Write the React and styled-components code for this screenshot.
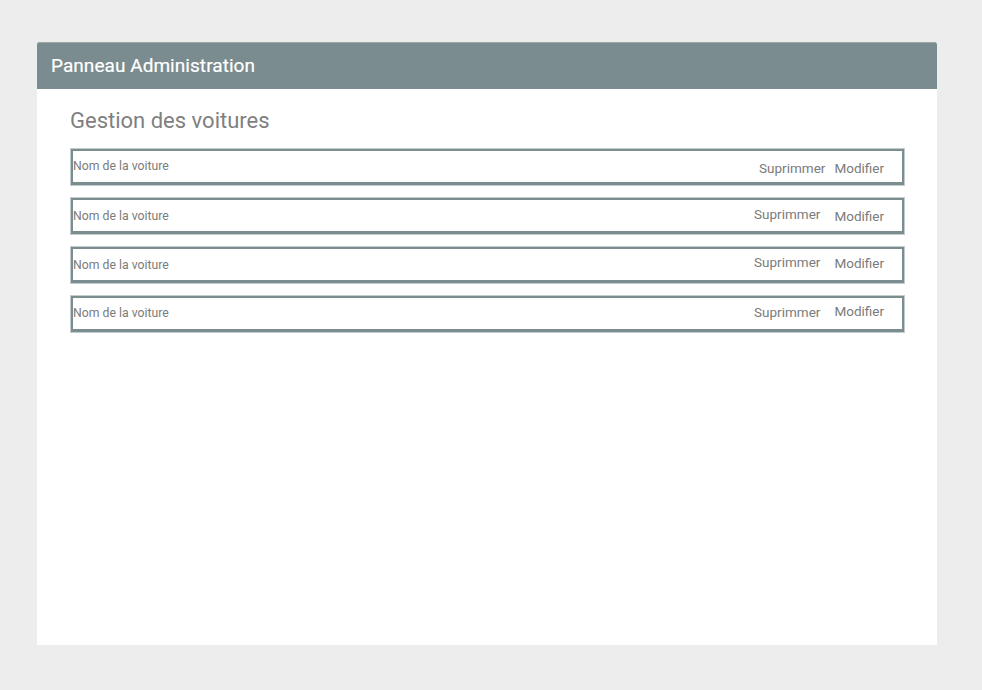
import React from "react";
import styled, { createGlobalStyle } from "styled-components";

const Global = createGlobalStyle`
  html, body { margin: 0; padding: 0; background: #ededed; }
  body { font-family: Roboto, "Liberation Sans", Arial, sans-serif; }
`;

const Page = styled.div`
  padding: 42px 0 0 37px;
  height: 690px;
  box-sizing: border-box;
`;

const Panel = styled.section`
  width: 900px;
  height: 603px;
  background: #ffffff;
  border-radius: 3px 3px 0 0;
  display: flex;
  flex-direction: column;
  overflow: hidden;
`;

const Header = styled.header`
  height: 47px;
  background: #7a8c8f;
  border-top: 1px solid #9aa8aa;
  box-sizing: border-box;
  display: flex;
  align-items: center;
  padding: 0 0 1px 14px;
  color: #ffffff;
  font-size: 19px;
  font-weight: 400;
  letter-spacing: 0.05px;
  -webkit-text-stroke: 0.2px #ffffff;
`;

const Body = styled.div`
  padding: 18px 32px 0 33px;
  display: flex;
  flex-direction: column;
`;

const Title = styled.h2`
  margin: 0 0 14px 0;
  font-size: 22px;
  line-height: 28px;
  font-weight: 400;
  color: #808080;
`;

const List = styled.div`
  display: flex;
  flex-direction: column;
  gap: 13px;
  padding: 0 1px;
`;

const Row = styled.div`
  height: 36px;
  box-sizing: border-box;
  border: 2px solid #7c8d90;
  border-bottom-width: 3px;
  box-shadow: 0 0 0 1px #c3cccd;
  display: flex;
  align-items: flex-start;
  padding: 0 18px 0 0;
  color: #7b7b7b;
`;

const Name = styled.span`
  font-size: 12.25px;
  line-height: 14px;
  margin-top: ${(p) => p.$top}px;
  flex: 1;
`;

const Action = styled.span`
  font-size: 13.5px;
  line-height: 15px;
  margin-top: ${(p) => p.$top}px;
  margin-left: ${(p) => p.$left}px;
`;

const rows = [
  { name: 8, sup: 10, mod: 10, modLeft: 9 },
  { name: 9, sup: 7, mod: 9, modLeft: 14 },
  { name: 9, sup: 6, mod: 7, modLeft: 14 },
  { name: 8, sup: 7, mod: 6, modLeft: 14 },
];

export default function App() {
  return (
    <>
      <Global />
      <Page>
        <Panel>
          <Header>Panneau Administration</Header>
          <Body>
            <Title>Gestion des voitures</Title>
            <List>
              {rows.map((r, i) => (
                <Row key={i}>
                  <Name $top={r.name}>Nom de la voiture</Name>
                  <Action $top={r.sup} $left={0}>Suprimmer</Action>
                  <Action $top={r.mod} $left={r.modLeft}>Modifier</Action>
                </Row>
              ))}
            </List>
          </Body>
        </Panel>
      </Page>
    </>
  );
}
